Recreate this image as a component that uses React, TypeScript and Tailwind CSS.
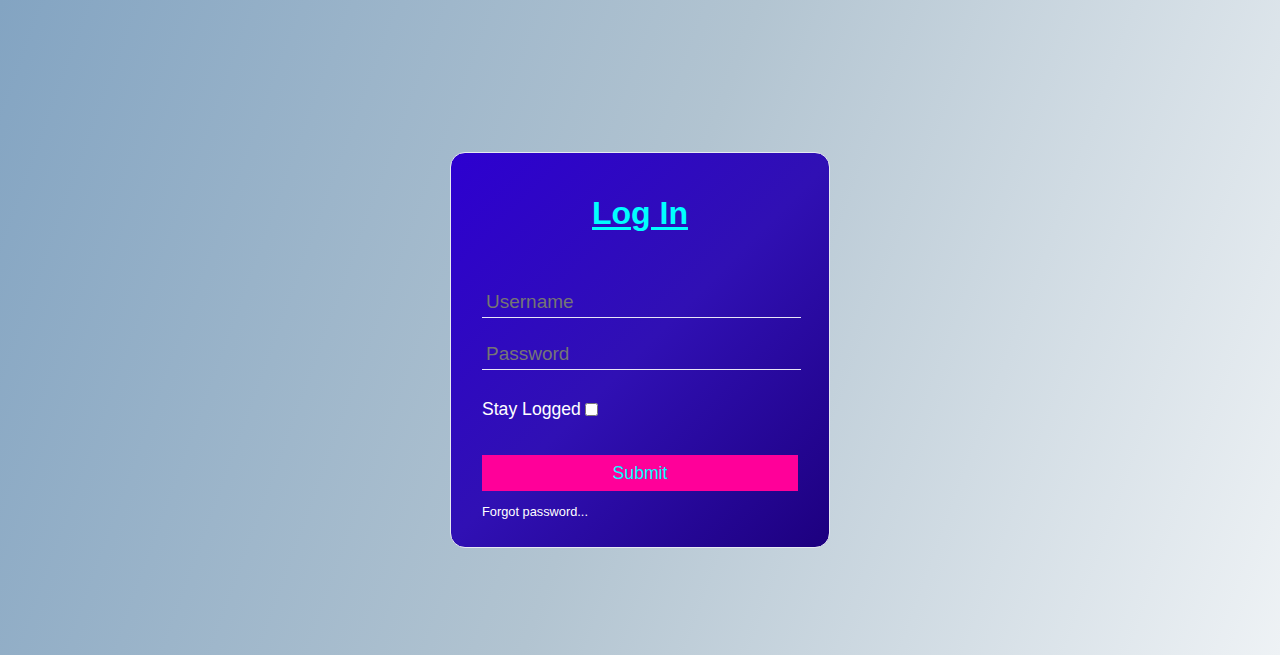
// Login Card
// ━━━━━━━━━━━━━━━━━━━━━━━━━━━━━━━━━━━━━━━━━━━━━━━━━━━━━━━━━━━━━━━━━━━━━━

function LoginCard() {
  return (
    <form
      className="w-[380px] h-[396px] rounded-[15px] border border-[#e6e9f2] bg-[linear-gradient(135deg,#2d00d0_0%,#3010b4_50%,#1d007f_100%)] px-[31px] pt-[42px]"
      onSubmit={(e) => e.preventDefault()}
    >
      <h1 className="text-center text-[32px] leading-[36px] font-bold text-[#00ffff] underline underline-offset-[3px] decoration-[3px]">
        Log In
      </h1>

      <input
        type="text"
        placeholder="Username"
        className="mt-[55px] block w-[319px] h-[32px] bg-transparent border-b border-[#e8e6f6] px-1 text-[19px] text-white placeholder:text-[#757575] outline-none"
      />
      <input
        type="password"
        placeholder="Password"
        className="mt-[20px] block w-[319px] h-[32px] bg-transparent border-b border-[#e8e6f6] px-1 text-[19px] text-white placeholder:text-[#757575] outline-none"
      />

      <label className="mt-[29px] flex items-center h-[20px] text-[17.6px] text-white">
        Stay Logged
        <input type="checkbox" className="ml-1 w-[13px] h-[13px]" />
      </label>

      <button
        type="submit"
        className="mt-[36px] block w-[316px] h-[36px] bg-[#ff0099] text-[17.6px] text-[#00ffff]"
      >
        Submit
      </button>

      <div className="mt-[13px] text-[12.8px] leading-[15px] text-white">Forgot password...</div>
    </form>
  );
}

export default function App() {
  return (
    <div className="w-full h-[655px] flex justify-center pt-[152px] bg-[linear-gradient(110deg,#83a4c2_0%,#b2c4d1_50%,#eef2f5_100%)] font-['Liberation_Sans',Arial,sans-serif]">
      <LoginCard />
    </div>
  );
}
